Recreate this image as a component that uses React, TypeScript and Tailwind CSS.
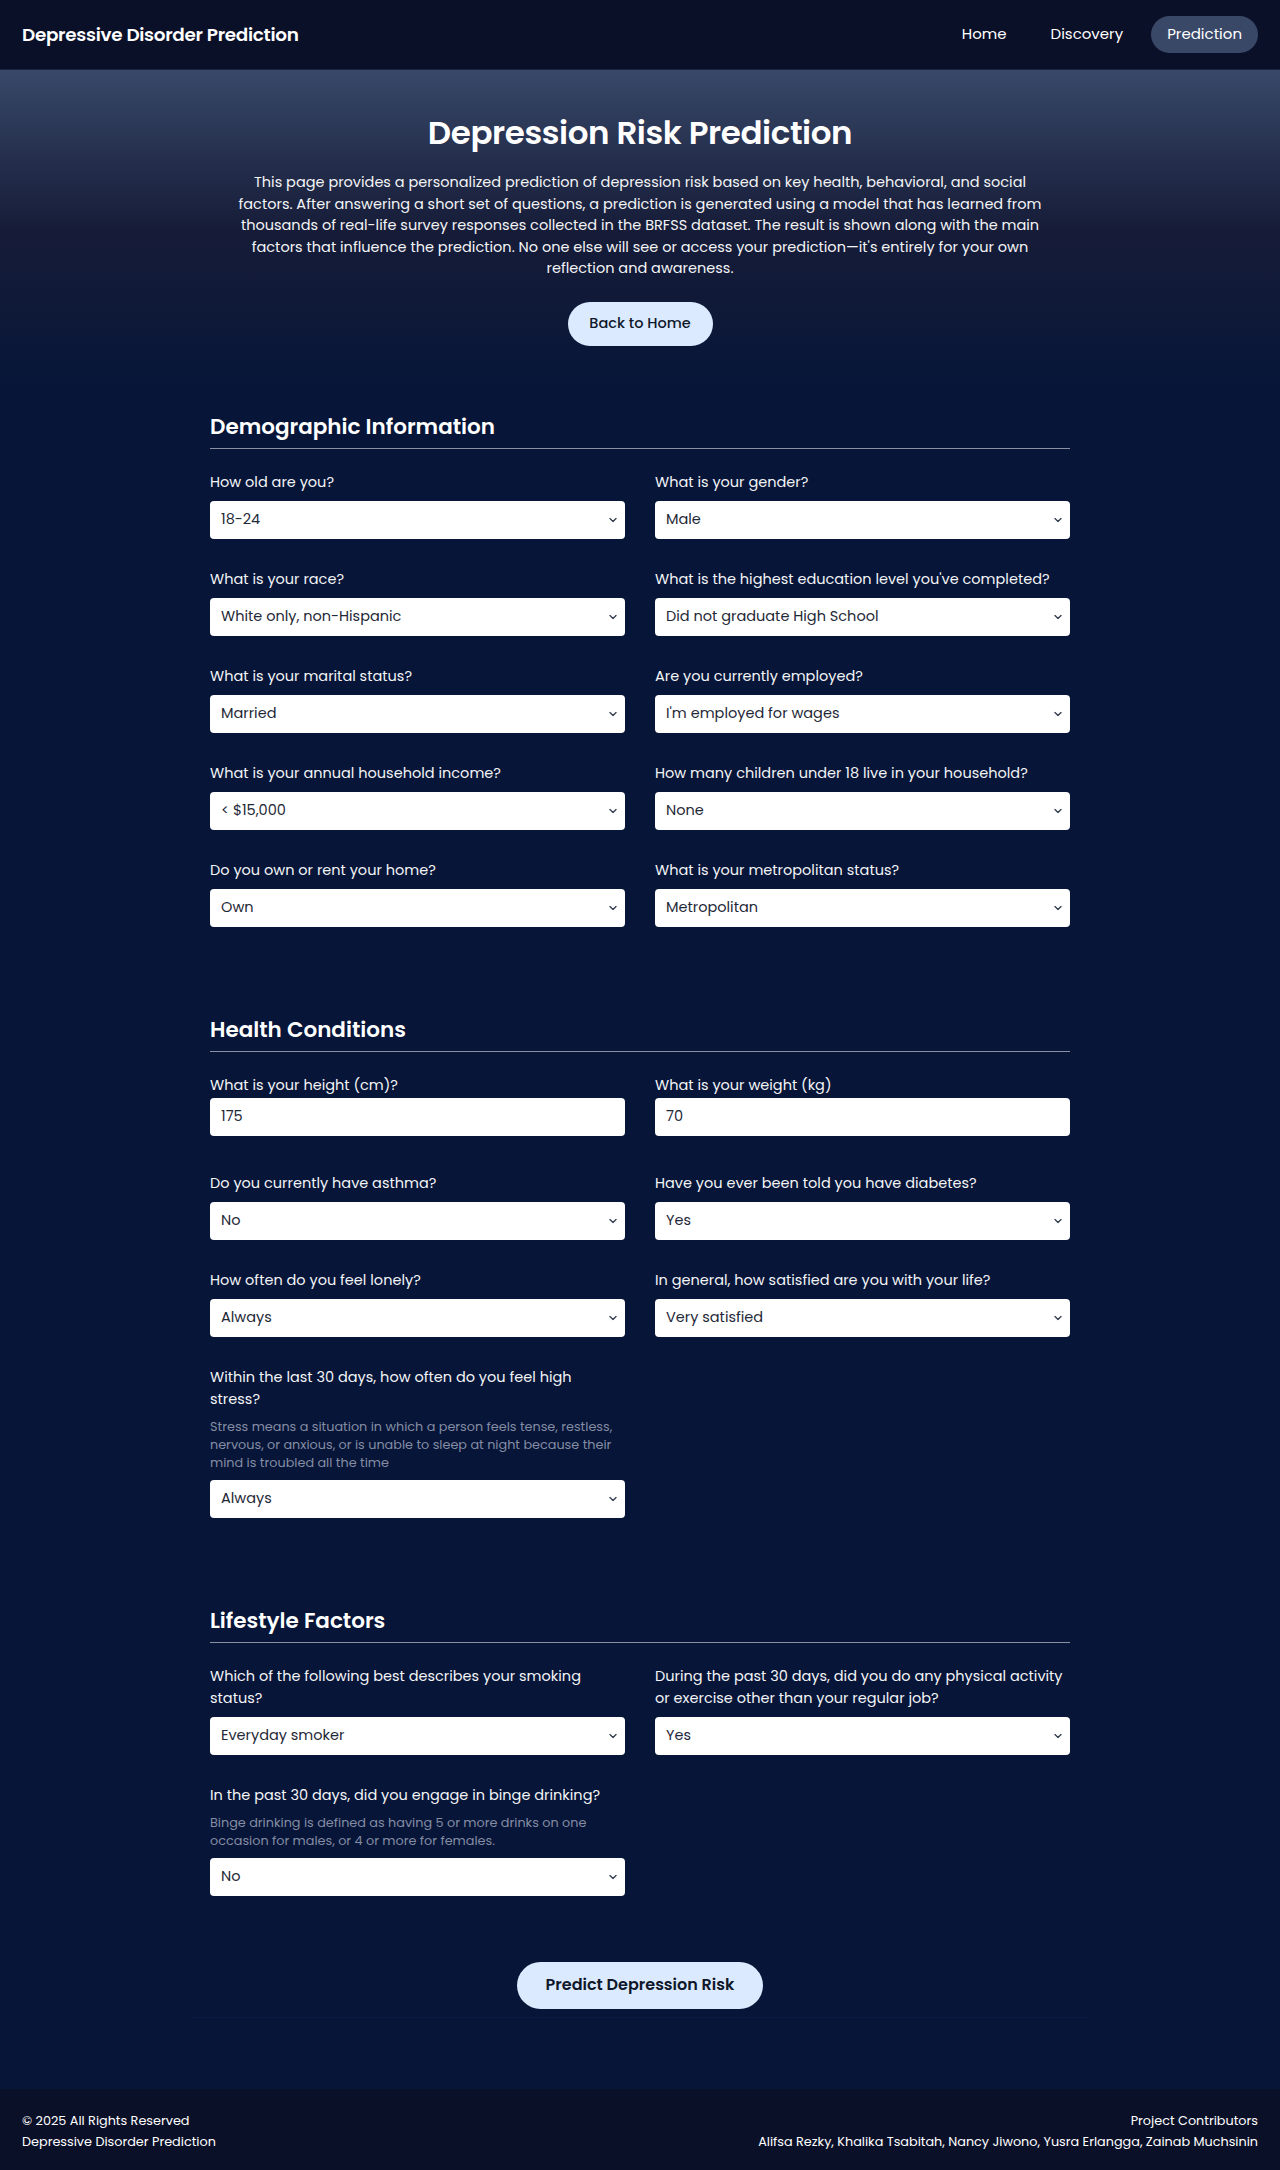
import * as React from "react";

type Field = {
  label: string;
  value: string;
  help?: string;
  input?: boolean;
};

const demographic: Field[] = [
  { label: "How old are you?", value: "18-24" },
  { label: "What is your gender?", value: "Male" },
  { label: "What is your race?", value: "White only, non-Hispanic" },
  { label: "What is the highest education level you've completed?", value: "Did not graduate High School" },
  { label: "What is your marital status?", value: "Married" },
  { label: "Are you currently employed?", value: "I'm employed for wages" },
  { label: "What is your annual household income?", value: "< $15,000" },
  { label: "How many children under 18 live in your household?", value: "None" },
  { label: "Do you own or rent your home?", value: "Own" },
  { label: "What is your metropolitan status?", value: "Metropolitan" },
];

const health: Field[] = [
  { label: "What is your height (cm)?", value: "175", input: true },
  { label: "What is your weight (kg)", value: "70", input: true },
  { label: "Do you currently have asthma?", value: "No" },
  { label: "Have you ever been told you have diabetes?", value: "Yes" },
  { label: "How often do you feel lonely?", value: "Always" },
  { label: "In general, how satisfied are you with your life?", value: "Very satisfied" },
  {
    label: "Within the last 30 days, how often do you feel high stress?",
    value: "Always",
    help: "Stress means a situation in which a person feels tense, restless, nervous, or anxious, or is unable to sleep at night because their mind is troubled all the time",
  },
];

const lifestyle: Field[] = [
  { label: "Which of the following best describes your smoking status?", value: "Everyday smoker" },
  { label: "During the past 30 days, did you do any physical activity or exercise other than your regular job?", value: "Yes" },
  {
    label: "In the past 30 days, did you engage in binge drinking?",
    value: "No",
    help: "Binge drinking is defined as having 5 or more drinks on one occasion for males, or 4 or more for females.",
  },
];

function Chevron() {
  return (
    <svg
      width="8"
      height="5"
      viewBox="0 0 8 5"
      fill="none"
      stroke="#374151"
      strokeWidth="1.4"
      strokeLinecap="round"
      strokeLinejoin="round"
      className="pointer-events-none absolute right-[8px] top-1/2 -translate-y-1/2"
      aria-hidden="true"
    >
      <path d="M1 1l3 3 3-3" />
    </svg>
  );
}

function FormField({ field }: { field: Field }) {
  return (
    <div className={field.input ? "mb-[7px]" : ""}>
      <label
        className={
          "block text-[14.5px] leading-[22px] text-[#f3f4f6] " + (field.input ? "mb-[2px]" : "mb-2")
        }
      >
        {field.label}
      </label>
      {field.help && (
        <p className="mb-2 text-[12.8px] leading-[18px] text-[#848ca3]">{field.help}</p>
      )}
      {field.input ? (
        <input
          type="text"
          defaultValue={field.value}
          className="block h-[38px] w-full rounded-[4px] bg-white px-[11px] text-[14.5px] text-[#1f2937] outline-none"
        />
      ) : (
        <div className="relative">
          <select
            defaultValue={field.value}
            className="block h-[38px] w-full appearance-none rounded-[4px] bg-white px-[11px] text-[14.5px] text-[#1f2937] outline-none"
          >
            <option>{field.value}</option>
          </select>
          <Chevron />
        </div>
      )}
    </div>
  );
}

function Section({ title, fields, last }: { title: string; fields: Field[]; last?: boolean }) {
  return (
    <section className={last ? "" : "mb-[88px]"}>
      <h2 className="border-b border-[#8b91a3] pb-[7px] text-[21.5px] font-semibold leading-[29px] text-white">
        {title}
      </h2>
      <div className="mt-[22px] grid grid-cols-2 gap-x-[30px] gap-y-[29px]">
        {fields.map((f) => (
          <FormField key={f.label} field={f} />
        ))}
      </div>
    </section>
  );
}

export default function App() {
  return (
    <div className="flex min-h-[2170px] flex-col bg-[#061538] font-['Poppins','Open_Sans',sans-serif]">
      {/* Navbar */}
      <nav className="flex h-[70px] items-center justify-between border-b border-[#1c2440] bg-[#0b1029] pl-[22px] pr-[22px]">
        <span className="text-[18.4px] font-semibold tracking-[-0.3px] text-white">Depressive Disorder Prediction</span>
        <div className="flex items-center gap-[12px] text-[15px] text-white">
          <a className="rounded-full px-4 py-[7px]">Home</a>
          <a className="rounded-full px-4 py-[7px]">Discovery</a>
          <a className="rounded-full bg-[#3a4868] px-4 py-[7px]">Prediction</a>
        </div>
      </nav>

      {/* Hero */}
      <header className="bg-gradient-to-b from-[#384868] via-[#161c38] to-[#061538] px-6 pb-[48px] pt-[41px] text-center">
        <h1 className="text-[32.5px] font-semibold leading-[44px] tracking-[-0.4px] text-white">Depression Risk Prediction</h1>
        <p className="mx-auto mt-[17px] max-w-[820px] text-[14.5px] leading-[21.6px] text-[#f3f4f6]">
          This page provides a personalized prediction of depression risk based on key health, behavioral, and social
          factors. After answering a short set of questions, a prediction is generated using a model that has learned
          from thousands of real-life survey responses collected in the BRFSS dataset. The result is shown along with
          the main factors that influence the prediction. No one else will see or access your prediction—it's entirely
          for your own reflection and awareness.
        </p>
        <button className="mt-[22px] h-[44px] w-[145px] rounded-full bg-[#dbeafe] text-[14.5px] font-medium text-[#0f172a]">
          Back to Home
        </button>
      </header>

      {/* Form */}
      <main className="mx-auto w-[900px] px-[20px] pt-[18px]">
        <Section title="Demographic Information" fields={demographic} />
        <Section title="Health Conditions" fields={health} />
        <Section title="Lifestyle Factors" fields={lifestyle} last />
        <div className="mt-[66px] flex justify-center">
          <button className="h-[47px] w-[246px] rounded-full bg-[#dbeafe] text-[16px] font-semibold text-[#0f172a]">
            Predict Depression Risk
          </button>
        </div>
      </main>
      <div className="mx-auto mt-[8px] h-px w-[897px] bg-[#0a1a44]" />

      {/* Footer */}
      <footer className="mt-auto flex justify-between bg-[#0b1029] px-[22px] pb-[18px] pt-[21px] text-[12.8px] leading-[21px] text-white">
        <div>
          <p>© 2025 All Rights Reserved</p>
          <p>Depressive Disorder Prediction</p>
        </div>
        <div className="text-right">
          <p>Project Contributors</p>
          <p>Alifsa Rezky, Khalika Tsabitah, Nancy Jiwono, Yusra Erlangga, Zainab Muchsinin</p>
        </div>
      </footer>
    </div>
  );
}
